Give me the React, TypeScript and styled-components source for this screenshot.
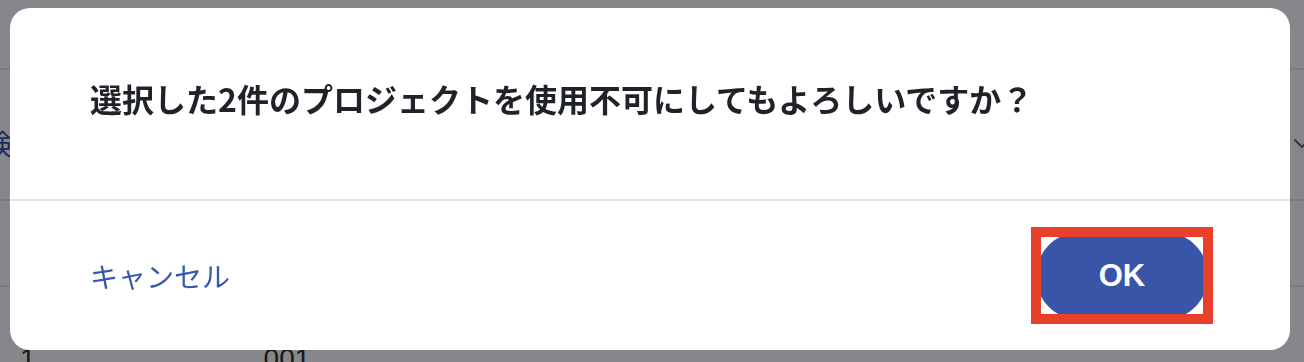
import React from 'react'
import styled, { createGlobalStyle } from 'styled-components'

const GlobalStyle = createGlobalStyle`
  html, body {
    margin: 0;
    padding: 0;
    width: 1304px;
    height: 362px;
    overflow: hidden;
    background: #ffffff;
    font-family: 'Noto Sans CJK JP', 'Noto Sans', sans-serif;
  }
`

const Page = styled.main`
  width: 1304px;
  height: 362px;
  display: flex;
  flex-direction: column;
  background: #ffffff;
`

const PageRow = styled.div<{ $h: number }>`
  height: ${(p) => p.$h}px;
  flex-shrink: 0;
  display: flex;
  align-items: center;
  justify-content: space-between;
  border-bottom: 2px solid #e2e4e8;
  padding: 0 0 0 0;
  box-sizing: border-box;
`

const FilterLabel = styled.span`
  font-size: 28px;
  color: #2d4a96;
  margin-left: -16px;
  margin-top: 16px;
`

const Chevron = styled.svg`
  width: 24px;
  height: 24px;
  margin-right: -10px;
  margin-top: 16px;
`

const CodeRow = styled.div`
  display: flex;
  align-items: flex-start;
  gap: 228px;
  padding: 56px 0 0 20px;
  font-size: 28px;
  color: #222;
  font-family: 'Liberation Sans', sans-serif;
`

const Overlay = styled.div`
  position: fixed;
  inset: 0;
  background: rgba(13, 15, 23, 0.5);
  display: flex;
  padding: 8px 14px 12px 10px;
`

const Dialog = styled.section`
  flex: 1;
  background: #ffffff;
  border-radius: 20px;
  display: flex;
  flex-direction: column;
  overflow: hidden;
`

const Header = styled.div`
  height: 191px;
  flex-shrink: 0;
  display: flex;
  align-items: center;
  padding: 0 80px 12px 80px;
  box-sizing: border-box;
`

const Title = styled.h2`
  margin: 0;
  font-size: 32px;
  line-height: 48px;
  font-weight: 700;
  color: #1f2329;
  letter-spacing: 0;
`

const Footer = styled.div`
  flex: 1;
  border-top: 2px solid #dfe2e6;
  display: flex;
  align-items: center;
  justify-content: space-between;
  padding: 0 77px 0 80px;
`

const CancelLink = styled.button`
  border: none;
  background: none;
  padding: 0;
  font-family: 'Noto Sans CJK JP', sans-serif;
  font-size: 28px;
  color: #3659aa;
  cursor: pointer;
`

const Highlight = styled.div`
  display: flex;
  border: 10px solid #e8402a;
  overflow: hidden;
  margin-top: -1px;
`

const OkButton = styled.button`
  width: 172px;
  height: 88px;
  margin: -5px -5px -6px;
  border: none;
  border-radius: 44px;
  background: #3955a8;
  color: #ffffff;
  font-family: 'Liberation Sans', Arial, sans-serif;
  font-weight: 700;
  font-size: 31px;
  cursor: pointer;
`

export default function App() {
  return (
    <>
      <GlobalStyle />
      <Page>
        <PageRow $h={70} />
        <PageRow $h={131}>
          <FilterLabel>検索</FilterLabel>
          <Chevron viewBox="0 0 24 24" fill="none" stroke="#5a5d66" strokeWidth="2" strokeLinecap="round" strokeLinejoin="round">
            <path d="M5 9l7 7 7-7" />
          </Chevron>
        </PageRow>
        <PageRow $h={86} />
        <CodeRow>
          <span>1</span>
          <span>001</span>
        </CodeRow>
      </Page>
      <Overlay>
        <Dialog role="dialog">
          <Header>
            <Title>選択した2件のプロジェクトを使用不可にしてもよろしいですか？</Title>
          </Header>
          <Footer>
            <CancelLink>キャンセル</CancelLink>
            <Highlight>
              <OkButton>OK</OkButton>
            </Highlight>
          </Footer>
        </Dialog>
      </Overlay>
    </>
  )
}
